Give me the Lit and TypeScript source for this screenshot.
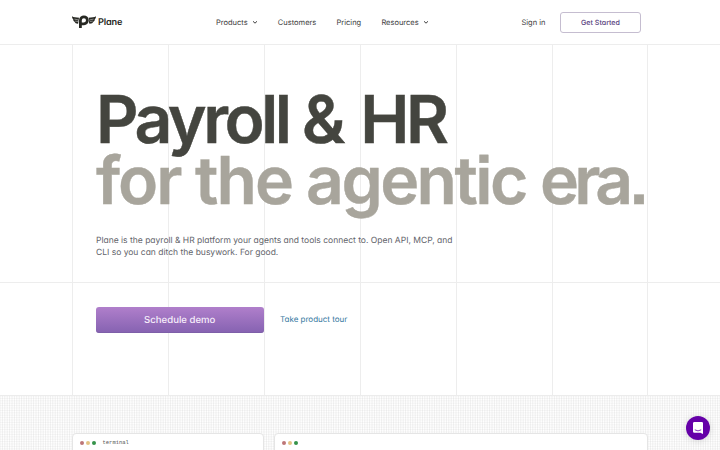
import { LitElement, css, html, svg } from 'lit'
import { customElement, property } from 'lit/decorators.js'

@customElement('plane-logo')
export class PlaneLogo extends LitElement {
  static styles = css`
    :host {
      display: flex;
      align-items: center;
      gap: 2px;
      color: #272823;
    }
    .mark {
      display: block;
      width: 24px;
      height: 14px;
    }
    .name {
      font: 600 9.2px/14px Inter, sans-serif;
      font-feature-settings: 'cv11';
      letter-spacing: -0.2px;
      padding-top: 2px;
    }
  `

  render() {
    return html`
      <svg class="mark" viewBox="0 0 24 14" fill="none">
        <path d="M0 1.2C1.6 2.5 4 2.3 7.2 2.8L6.4 8.6C4.5 8.8 3 8 2.6 6.7C1.5 6.2 1.2 5.3 1.3 4.4C.4 3.6 0 2.5 0 1.2Z" fill="currentColor"/>
        <path d="M24 1.2C22.4 2.5 20 2.3 16.4 2.8L17.2 8.6C19.2 8.8 20.9 8 21.3 6.7C22.5 6.2 22.8 5.3 22.7 4.4C23.6 3.6 24 2.5 24 1.2Z" fill="currentColor"/>
        <path d="M2.4 4.1L6 4.8M3.2 6.1L6 6.5M21.6 4.1L18 4.8M20.8 6.1L18 6.5" stroke="#fff" stroke-width=".45"/>
        <path d="M8.4 13V5.2A3.5 3.5 0 1 1 12 8.8H9" stroke="#fff" stroke-width="3.8"/>
        <path d="M8.4 13V5.2A3.5 3.5 0 1 1 12 8.8H9" stroke="currentColor" stroke-width="2.8"/>
      </svg>
      <span class="name">Plane</span>
    `
  }
}

@customElement('window-card')
export class WindowCard extends LitElement {
  @property() label = ''

  static styles = css`
    :host {
      box-sizing: border-box;
      display: flex;
      align-items: center;
      height: 40px;
      padding: 0 6.5px 21px;
      background: #fff;
      border: 1px solid #e5e5e5;
      border-radius: 4px;
    }
    .dots {
      display: flex;
      gap: 2px;
    }
    .dot {
      width: 4px;
      height: 4px;
      border-radius: 50%;
    }
    .red { background: #bd7678; }
    .yellow { background: #e5c383; }
    .green { background: #35934a; }
    .label {
      margin-left: 7px;
      padding-top: 1px;
      color: #555;
      font: 5.5px/8px 'Liberation Mono', monospace;
    }
  `

  render() {
    return html`
      <div class="dots">
        <div class="dot red"></div>
        <div class="dot yellow"></div>
        <div class="dot green"></div>
      </div>
      <span class="label">${this.label}</span>
    `
  }
}

const chevron = svg`<path d="M1 1.3L3 3.2L5 1.3" fill="none" stroke="currentColor" stroke-width="1" />`

@customElement('app-root')
export class AppRoot extends LitElement {
  static styles = css`
    :host {
      display: block;
      height: 450px;
      overflow: hidden;
      position: relative;
      background: #fff;
      font-family: Inter, sans-serif;
      font-feature-settings: 'cv11';
      text-rendering: geometricPrecision;
    }
    .header {
      box-sizing: border-box;
      height: 45px;
      border-bottom: 1px solid #ededed;
      display: grid;
      grid-template-columns: 144px 1fr auto;
      align-items: center;
      padding: 0 79px 0 72px;
      font-size: 7.5px;
      color: #3d3d3d;
    }
    .nav,
    .account,
    .item {
      display: flex;
      align-items: center;
    }
    .nav { gap: 20.2px; }
    .item { gap: 4px; }
    .chevron {
      width: 6px;
      height: 5px;
    }
    .account { gap: 14.5px; }
    .started {
      box-sizing: border-box;
      width: 81px;
      height: 21px;
      border: 1px solid #c5bdd0;
      border-radius: 3px;
      display: flex;
      align-items: center;
      justify-content: center;
      font-size: 7.1px;
      font-weight: 500;
      color: #553b7c;
    }
    .hero {
      box-sizing: border-box;
      height: 350px;
      background: repeating-linear-gradient(90deg, #ededed 0 1px, transparent 1px 96px) 72px 0 / 575px 100% no-repeat,
        linear-gradient(#ededed, #ededed) 647px 0 / 1px 100% no-repeat;
    }
    .intro {
      box-sizing: border-box;
      height: 238px;
      padding: 44px 72px 0 96px;
      border-bottom: 1px solid #ededed;
    }
    .title {
      margin: 0;
      font: 600 66px/61px Inter, sans-serif;
      font-feature-settings: 'ss07';
      -webkit-text-stroke: 0.4px currentColor;
      white-space: nowrap;
      color: #44453f;
    }
    .line { display: block; }
    .first { letter-spacing: -3.5px; }
    .amp { letter-spacing: -0.9px; }
    .second {
      letter-spacing: -2.55px;
      color: #a8a59c;
    }
    .loose { letter-spacing: -2px; }
    .tight { letter-spacing: -4.6px; }
    .copy {
      margin: 23.5px 0 0;
      font-size: 8.5px;
      line-height: 12px;
      color: #62636a;
    }
    .actions {
      display: flex;
      align-items: center;
      gap: 16.5px;
      padding: 23.5px 96px 0;
    }
    .demo {
      box-sizing: border-box;
      width: 167.5px;
      height: 26px;
      padding-top: 1px;
      border-radius: 3px;
      box-shadow: inset 0 -1px #765c9f80;
      background: linear-gradient(#b07fcb, #8562b1);
      display: flex;
      align-items: center;
      justify-content: center;
      color: #f7eefb;
      font-size: 9.6px;
      font-weight: 500;
    }
    .tour {
      font-size: 8px;
      line-height: 10px;
      padding-bottom: 2px;
      color: #3578a0;
    }
    .preview {
      box-sizing: border-box;
      height: 55px;
      padding: 37px 72px 0;
      border-top: 1px solid #ececec;
      display: grid;
      grid-template-columns: 192px 374px;
      gap: 10px;
      background:
        repeating-linear-gradient(90deg, #0000000e 0, #0000 1px, #0000 1.4px, #0000000e 2.4px),
        repeating-linear-gradient(#00000009 0, #0000 1px, #0000 1.4px, #00000009 2.4px),
        #fff;
    }
    .chat {
      position: absolute;
      right: 10px;
      bottom: 10px;
      width: 24px;
      height: 24px;
      border-radius: 50%;
      background: #6500a8;
      box-shadow: 0 1px 7px #0002;
    }
  `

  menuItem(text: string, hasMenu = false) {
    return html`
      <div class="item">
        <span>${text}</span>
        ${hasMenu ? html`<svg class="chevron" viewBox="0 0 6 5">${chevron}</svg>` : ''}
      </div>
    `
  }

  render() {
    return html`
      <header class="header">
        <plane-logo></plane-logo>
        <nav class="nav">
          ${this.menuItem('Products', true)}
          ${this.menuItem('Customers')}
          ${this.menuItem('Pricing')}
          ${this.menuItem('Resources', true)}
        </nav>
        <div class="account">
          <span>Sign in</span>
          <div class="started">Get Started</div>
        </div>
      </header>
      <main class="hero">
        <section class="intro">
          <h1 class="title">
            <span class="line first">Payroll <span class="amp">&amp; </span>HR</span>
            <span class="line second"><span class="loose">for the</span> agentic <span class="tight">era.</span></span>
          </h1>
          <p class="copy">
            Plane is the payroll &amp; HR platform your agents and tools connect to. Open API, MCP, and<br>
            CLI so you can ditch the busywork. For good.
          </p>
        </section>
        <div class="actions">
          <div class="demo">Schedule demo</div>
          <div class="tour">Take product tour</div>
        </div>
      </main>
      <section class="preview">
        <window-card label="terminal"></window-card>
        <window-card></window-card>
      </section>
      <svg class="chat" viewBox="0 0 24 24">
        <path d="M8.4 6H15.8Q17 6 17 7.2V18L14.3 16.8H8.4Q7 16.8 7 15.4V7.4Q7 6 8.4 6Z" fill="#fff"/>
        <path d="M8.8 13.8Q12 16 15.2 13.8" fill="none" stroke="#6500a8" stroke-width=".8"/>
      </svg>
    `
  }
}
